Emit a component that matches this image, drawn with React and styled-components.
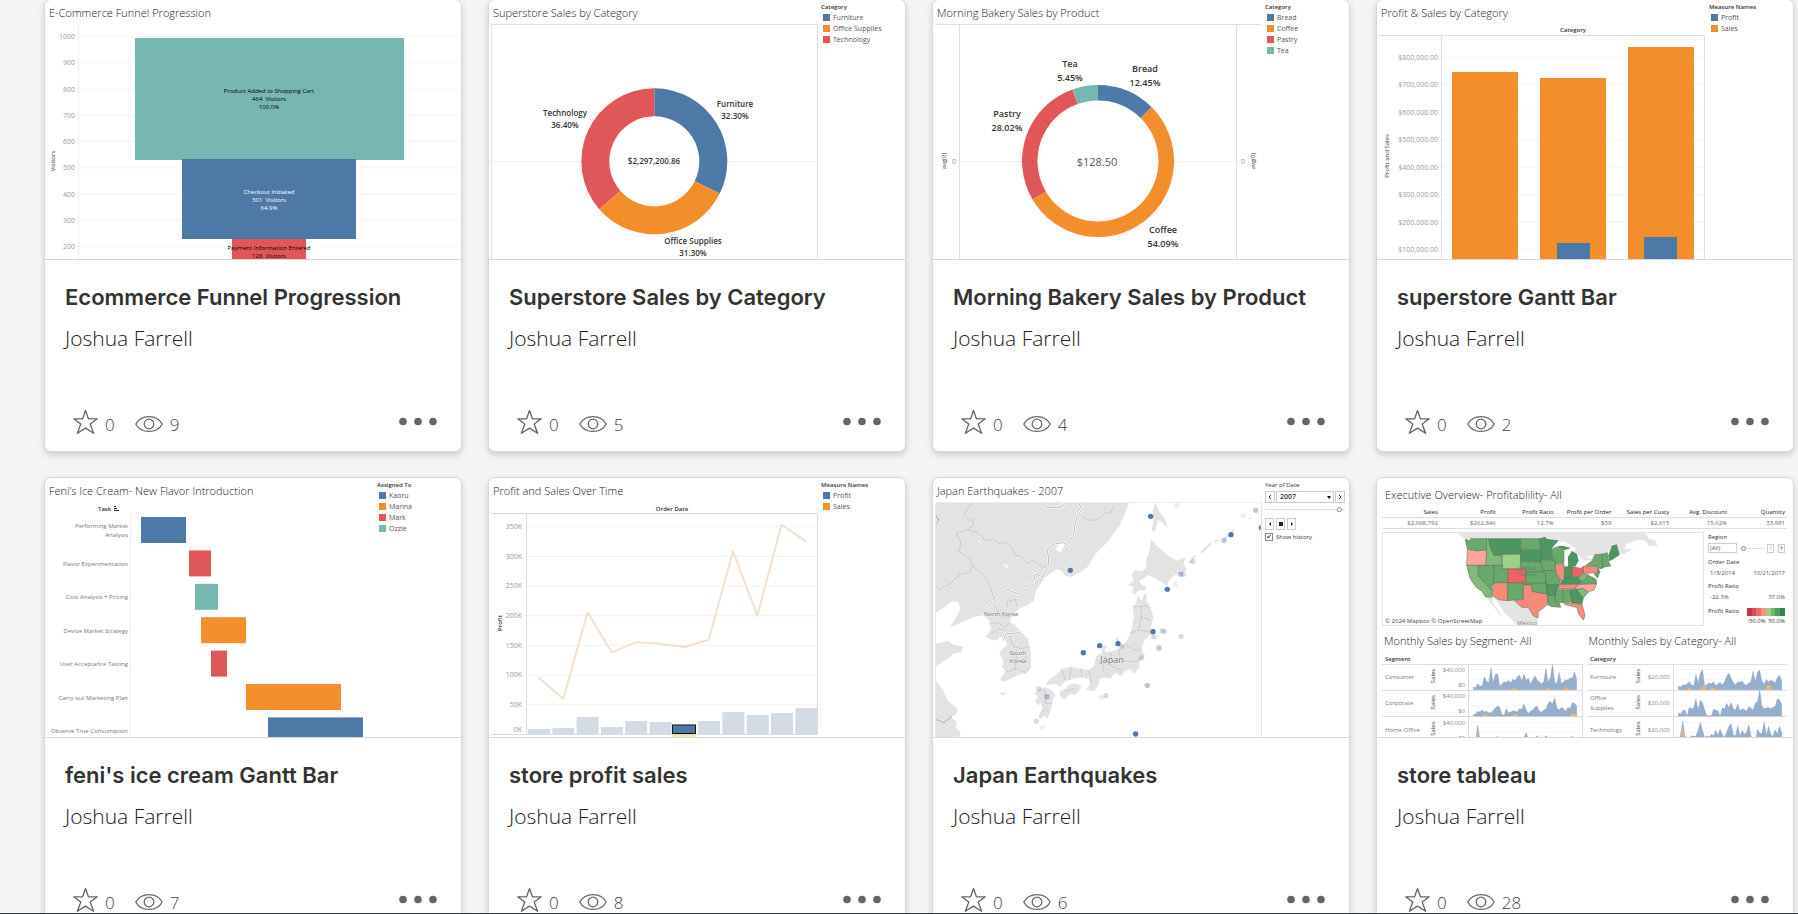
import React from 'react';
import styled, { createGlobalStyle, css } from 'styled-components';

const BLUE = '#4e79a7';
const ORANGE = '#f28e2b';
const RED = '#e15759';
const TEAL = '#76b7b2';
const FONT = '"Open Sans", "Noto Sans", sans-serif';

const GlobalStyle = createGlobalStyle`
  *, *::before, *::after { box-sizing: border-box; }
  body {
    margin: 0;
    background: #f4f4f4;
    color: #333;
    font-family: ${FONT};
  }
  button, input, select { font: inherit; color: inherit; margin: 0; }
`;

/* ---------- page and card ---------- */

const Page = styled.main`
  height: 100vh;
  overflow: hidden;
  border-bottom: 1px solid #3a444c;
`;

const Grid = styled.div`
  display: grid;
  grid-template-columns: repeat(4, minmax(0, 1fr));
  gap: 25px 26px;
  margin-top: -1px;
  padding: 0 4px 25px 44px;
`;

const Card = styled.article`
  display: flex;
  flex-direction: column;
  overflow: hidden;
  background: #fff;
  border: 1px solid #d8d8d8;
  border-radius: 7px;
  box-shadow: 0 3px 6px rgba(0, 0, 0, 0.16);
`;

const Thumb = styled.div`
  display: flex;
  flex-direction: ${(p) => (p.$stacked ? 'column' : 'row')};
  height: 260px;
  padding-left: ${(p) => (p.$stacked ? 0 : 1)}px;
  overflow: hidden;
  border-bottom: 1px solid #d8d8d8;
`;

const Body = styled.div`
  display: flex;
  flex-direction: column;
  min-height: 191px;
  padding: 23px 24px 16px 20px;
`;

const CardTitle = styled.h2`
  margin: 0 0 13px;
  font-family: Inter, "Open Sans", sans-serif;
  font-size: 22px;
  line-height: 28px;
  font-weight: 600;
  white-space: nowrap;
`;

const Author = styled.a`
  font-size: 21px;
  line-height: 28px;
  font-weight: 300;
  color: #222;
  text-decoration: none;
`;

const TitleLink = styled.a`
  color: #333;
  text-decoration: none;
`;

const Footer = styled.div`
  display: flex;
  align-items: flex-end;
  gap: 20px;
  height: 26px;
  margin-top: auto;
  padding-left: 8px;
`;

const Stat = styled.div`
  display: flex;
  align-items: flex-end;
  gap: 7px;
  font-size: 17px;
  line-height: 20px;
  font-weight: 300;
  color: #444;
`;

const IconButton = styled.button`
  display: flex;
  padding: 0;
  border: 0;
  background: none;
  cursor: pointer;
`;

const MoreButton = styled(IconButton)`
  margin-left: auto;
`;

/* ---------- thumbnail parts ---------- */

const Main = styled.div`
  display: flex;
  flex-direction: column;
  flex: 1;
  min-width: 0;
`;

const Side = styled.aside`
  flex: none;
  width: 87px;
  padding: 2px 4px 0 3px;
  font-size: 6px;
  line-height: 10px;
  color: #333;
`;

const ThumbTitle = styled.h3`
  margin: 0;
  padding: ${(p) => (p.$roomy ? '9px 8px 5px' : '5px 3px 3px')};
  font-size: 11px;
  line-height: 16px;
  font-weight: 300;
  color: #222;
  white-space: nowrap;
`;

const Chart = styled.svg`
  display: block;
  width: 100%;
  flex: 1;
  min-height: 0;
  font-family: ${FONT};
  font-size: 6px;
  fill: #333;
`;

const Tick = styled.text`
  font-size: 7px;
  fill: #999;
`;

const Plot = ({ w = 329, y = 24, h = 235, label, children }) => (
  <Chart
    viewBox={`0 ${y} ${w} ${h}`}
    preserveAspectRatio="xMinYMin slice"
    role="img"
    aria-label={label}
  >
    {children}
  </Chart>
);

const LegendTitle = styled.div`
  font-weight: 600;
`;

const LegendList = styled.ul`
  margin: 0;
  padding: 0;
  list-style: none;
`;

const LegendItem = styled.li`
  display: flex;
  align-items: center;
  gap: 3px;
  height: 11px;
  padding-left: 2px;
  font-size: 7px;
  color: #555;
  white-space: nowrap;
`;

const Swatch = styled.span`
  width: 7px;
  height: 7px;
  background: ${(p) => p.$color};
`;

const Legend = ({ title, items }) => (
  <Side>
    <LegendTitle>{title}</LegendTitle>
    <LegendList>
      {items.map(([name, color]) => (
        <LegendItem key={name}>
          <Swatch $color={color} />
          {name}
        </LegendItem>
      ))}
    </LegendList>
  </Side>
);

const Framed = ({ title, children, side }) => (
  <Thumb>
    <Main>
      <ThumbTitle>{title}</ThumbTitle>
      {children}
    </Main>
    {side}
  </Thumb>
);

const VText = ({ x, y, children, ...rest }) => (
  <text transform={`translate(${x} ${y}) rotate(-90)`} textAnchor="middle" {...rest}>
    {children}
  </text>
);

const Lines = ({ x, ys, anchor = 'middle', rows, ...rest }) => (
  <g textAnchor={anchor} {...rest}>
    {rows.map((r, i) => (
      <text key={r + i} x={x} y={ys[i]}>{r}</text>
    ))}
  </g>
);

/* ---------- charts ---------- */

const Funnel = () => (
  <Framed title="E-Commerce Funnel Progression">
    <Plot w={415} label="Funnel of visitors by step">
      <path d="M32.5 25V260" stroke="#eee" />
      {[1000, 900, 800, 700, 600, 500, 400, 300, 200].map((v, i) => (
        <g key={v}>
          <path d={`M30 ${36.5 + i * 26.25}H414`} stroke="#f4f4f4" />
          <Tick x="29" y={39 + i * 26.25} textAnchor="end">{v}</Tick>
        </g>
      ))}
      <rect x="89" y="38" width="269" height="122" fill={TEAL} />
      <rect x="136" y="159" width="174" height="80" fill={BLUE} />
      <rect x="186" y="239" width="74" height="22" fill={RED} />
      <Lines x="223" ys={[93, 101, 109]} rows={['Product Added to Shopping Cart', '464\u00a0 Visitors', '100.0%']} fill="#000" />
      <Lines x="223" ys={[194, 202, 210]} rows={['Checkout Initiated', '301\u00a0 Visitors', '64.9%']} fill="#fff" />
      <Lines x="223" ys={[250, 258]} rows={['Payment Information Entered', '128\u00a0 Visitors']} fill="#000" />
      <VText x={9} y={161}>Visitors</VText>
    </Plot>
  </Framed>
);

const Donut = ({ cx, cy, outer, inner, parts }) => {
  let at = 0;
  const point = (r, t) =>
    `${(cx + r * Math.sin(t * 2 * Math.PI)).toFixed(2)} ${(cy - r * Math.cos(t * 2 * Math.PI)).toFixed(2)}`;
  return parts.map(([share, color]) => {
    const from = at;
    const to = at + share / 100;
    at = to;
    const big = share > 50 ? 1 : 0;
    return (
      <path
        key={color}
        fill={color}
        d={`M${point(outer, from)}A${outer} ${outer} 0 ${big} 1 ${point(outer, to)}L${point(inner, to)}A${inner} ${inner} 0 ${big} 0 ${point(inner, from)}Z`}
      />
    );
  });
};

const Superstore = () => (
  <Framed
    title="Superstore Sales by Category"
    side={<Legend title="Category" items={[['Furniture', BLUE], ['Office Supplies', ORANGE], ['Technology', RED]]} />}
  >
    <Plot label="Sales share by category">
      <path d="M1.5 260V24.5H327.5V260" fill="none" stroke="#ddd" />
      <path d="M2 161.5H327" stroke="#eee" />
      <circle cx="164" cy="161" r="46" fill="#fff" />
      <Donut cx={164.3} cy={161.3} outer={73} inner={45} parts={[[32.3, BLUE], [31.3, ORANGE], [36.4, RED]]} />
      <g fontSize="8" fontWeight="600" fill="#333">
        <Lines x="245" ys={[107, 119]} rows={['Furniture', '32.30%']} />
        <Lines x="75" ys={[116, 128]} rows={['Technology', '36.40%']} />
        <Lines x="203" ys={[244, 256]} rows={['Office Supplies', '31.30%']} />
        <text x="164" y="164" textAnchor="middle">$2,297,200.86</text>
      </g>
    </Plot>
  </Framed>
);

const Bakery = () => (
  <Framed
    title="Morning Bakery Sales by Product"
    side={<Legend title="Category" items={[['Bread', BLUE], ['Coffee', ORANGE], ['Pastry', RED], ['Tea', TEAL]]} />}
  >
    <Plot label="Bakery sales share by product">
      <path d="M1 24.5H327M25.5 25V260M302.5 25V260" stroke="#ddd" />
      <path d="M23 161.5H305" stroke="#eee" />
      <circle cx="164" cy="161" r="62" fill="#fff" />
      <Donut
        cx={164}
        cy={161}
        outer={76}
        inner={60.5}
        parts={[[12.45, BLUE], [54.08, ORANGE], [28.02, RED], [5.45, TEAL]]}
      />
      <g fontSize="9" fontWeight="600" fill="#333">
        <Lines x="136" ys={[67, 81]} rows={['Tea', '5.45%']} />
        <Lines x="211" ys={[72, 86]} rows={['Bread', '12.45%']} />
        <Lines x="73" ys={[117, 131]} rows={['Pastry', '28.02%']} />
        <Lines x="229" ys={[233, 247]} rows={['Coffee', '54.09%']} />
      </g>
      <text x="163" y="166" textAnchor="middle" fontSize="11" fill="#555">$128.50</text>
      <VText x={12} y={161}>avg(0)</VText>
      <VText x={321} y={161}>avg(0)</VText>
      <Tick x="18" y="164">0</Tick>
      <Tick x="307" y="164">0</Tick>
    </Plot>
  </Framed>
);

const ProfitBars = () => (
  <Framed
    title="Profit & Sales by Category"
    side={<Legend title="Measure Names" items={[['Profit', BLUE], ['Sales', ORANGE]]} />}
  >
    <Plot label="Profit and sales by category">
      <text x="195" y="32" textAnchor="middle" fontWeight="600">Category</text>
      <path d="M1 35.5H326.5V260M63.5 35.5V260" fill="none" stroke="#ddd" />
      {[8, 7, 6, 5, 4, 3, 2, 1].map((n, i) => (
        <g key={n}>
          <path d={`M64 ${57 + i * 27.5}H326`} stroke="#f4f4f4" />
          <Tick x="60" y={59.5 + i * 27.5} textAnchor="end">{`$${n}00,000.00`}</Tick>
        </g>
      ))}
      <g fill={ORANGE}>
        <rect x="74" y="72" width="66" height="190" />
        <rect x="162" y="78" width="66" height="190" />
        <rect x="250" y="47" width="66" height="220" />
      </g>
      <g fill={BLUE}>
        <rect x="179" y="243" width="33" height="20" />
        <rect x="266" y="237" width="33" height="30" />
      </g>
      <VText x={11} y={156}>Profit and Sales</VText>
    </Plot>
  </Framed>
);

const TASKS = [
  [['Performing Market', 'Analysis'], 95, 45, BLUE],
  [['Flavor Experimentation'], 143, 22, RED],
  [['Cost Analysis + Pricing'], 149, 23, TEAL],
  [['Devise Market Strategy'], 155, 45, ORANGE],
  [['User Acceptance Tasting'], 165, 16, RED],
  [['Carry out Marketing Plan'], 200, 95, ORANGE],
  [['Observe True Consumption'], 222, 95, BLUE],
];

const IceCream = () => (
  <Framed
    title="Feni’s Ice Cream- New Flavor Introduction"
    side={
      <Legend title="Assigned To" items={[['Kaoru', BLUE], ['Marina', ORANGE], ['Mark', RED], ['Ozzie', TEAL]]} />
    }
  >
    <Plot label="Gantt chart of tasks">
      <text x="52" y="33" fontWeight="600">Task</text>
      <path d="M68 28.5H70M68 30.5H71M68 32.5H73" stroke="#333" />
      <path d="M84.5 35V260" stroke="#eee" />
      {TASKS.map(([rows, x, w, color], i) => (
        <g key={rows[0]}>
          <rect x={x} y={39 + i * 33.4} width={w} height="26" fill={color} />
          <Lines
            x="82"
            anchor="end"
            fill="#777"
            rows={rows}
            ys={rows.length > 1 ? [50, 59] : [54.5 + i * 33.4]}
          />
        </g>
      ))}
    </Plot>
  </Framed>
);

const PROFIT_TOPS = [251, 250, 239, 249, 243, 244, 247, 243, 234, 237, 235, 230];
const SALES_YS = [199.7, 221, 134.3, 174.3, 164.3, 165.7, 169, 161.7, 73.3, 137.7, 46.7, 63.3];

const OverTime = () => (
  <Framed
    title="Profit and Sales Over Time"
    side={<Legend title="Measure Names" items={[['Profit', BLUE], ['Sales', ORANGE]]} />}
  >
    <Plot label="Profit and sales over time">
      <text x="182" y="33" textAnchor="middle" fontWeight="600">Order Date</text>
      {[350, 300, 250, 200, 150, 100, 50].map((n, i) => (
        <g key={n}>
          <path d={`M37 ${48.7 + i * 29.67}H327`} stroke="#f2f2f2" />
          <Tick x="32" y={51 + i * 29.67} textAnchor="end">{`${n}K`}</Tick>
        </g>
      ))}
      <Tick x="32" y="254" textAnchor="end">0K</Tick>
      {PROFIT_TOPS.map((t, i) => (
        <rect key={i} x={38 + i * 24.3} y={t} width="22" height={256 - t} fill="#d3dce4" />
      ))}
      <path d="M1 35.5H327.5V256.5M36.5 35.5V256M1 256.5H328" fill="none" stroke="#ddd" />
      <rect x="182.5" y="247" width="23" height="8.5" fill={BLUE} stroke="#111" />
      <rect x="182" y="257" width="24" height="2" fill="#f3ef9c" />
      <polyline
        points={SALES_YS.map((y, i) => `${49 + i * 24.25},${y}`).join(' ')}
        fill="none"
        stroke="#f3e0cc"
        strokeWidth="2"
        strokeLinejoin="round"
        strokeLinecap="round"
      />
      <VText x={12} y={145} fontWeight="600">Profit</VText>
    </Plot>
  </Framed>
);

/* ---------- earthquakes ---------- */

const QUAKES = [
  [1, [[668, 139], [909, 194], [427, 301], [718, 358], [675, 485], [570, 521], [515, 527], [466, 548], [623, 792], [1000, 173]]],
  [0.42, [[983, 121], [888, 211], [693, 534], [658, 646], [357, 680], [758, 313]]],
  [0.26, [[795, 274], [766, 313], [703, 482], [709, 485], [677, 500], [759, 499], [640, 564], [332, 657], [325, 754], [534, 677], [582, 529]]],
  [0.12, [[746, 107], [946, 136], [742, 343], [520, 682]]],
];

const ControlRow = styled.div`
  display: flex;
  align-items: center;
  gap: ${(p) => p.$gap || 2}px;
  margin-top: ${(p) => p.$top || 0}px;
`;

const TinyButton = styled.button`
  display: flex;
  align-items: center;
  justify-content: center;
  flex: none;
  width: ${(p) => p.$w || 10}px;
  height: ${(p) => p.$h || 12}px;
  padding: 0;
  border: 1px solid #ccc;
  background: #fff;
`;

const SelectBox = styled.div`
  position: relative;
  flex: 1;
  min-width: 0;

  &::after {
    content: '';
    position: absolute;
    right: 3px;
    top: 5px;
    border: 2px solid transparent;
    border-top: 3px solid #111;
    border-bottom: 0;
    pointer-events: none;
  }
`;

const YearSelect = styled.select`
  display: block;
  width: 100%;
  height: 12px;
  padding: 0 3px;
  border: 1px solid #ccc;
  border-radius: 0;
  background: #fff;
  appearance: none;
  font-size: 7px;
  line-height: 10px;
  font-weight: 600;
`;

const thumbKnob = css`
  appearance: none;
  width: 5px;
  height: 5px;
  border: 1px solid #888;
  border-radius: 50%;
  background: #fff;
`;

const Slider = styled.input`
  appearance: none;
  display: block;
  flex: ${(p) => (p.$w ? 'none' : 1)};
  width: ${(p) => (p.$w ? `${p.$w}px` : '100%')};
  min-width: 0;
  height: 5px;
  background: linear-gradient(#ddd, #ddd) center / 100% 1px no-repeat;

  &::-webkit-slider-thumb { ${thumbKnob} }
`;

const CheckLabel = styled.label`
  display: flex;
  align-items: center;
  gap: 3px;
  margin-top: 2px;
  white-space: nowrap;
`;

const CheckInput = styled.input`
  appearance: none;
  width: 8px;
  height: 8px;
  border: 1px solid #888;
  background: #fff;

  &:checked::after {
    content: '';
    display: block;
    width: 2px;
    height: 4px;
    margin: 0 auto;
    border: solid #444;
    border-width: 0 1px 1px 0;
    transform: rotate(40deg);
  }
`;

const Glyph = ({ d, stroke }) => (
  <svg width="6" height="6" viewBox="0 0 6 6" aria-hidden="true">
    <path d={d} fill={stroke ? 'none' : '#222'} stroke={stroke || 'none'} />
  </svg>
);

const LAND = [
  'M22 98H603L592 128L575 165L552 198L530 225L510 243L495 265L478 292L455 308L430 320L413 318L398 300L385 298L370 310L352 322L335 345L322 366L318 392L300 405L276 414L262 425L250 440L246 456L262 466L280 486L300 508L308 545L309 592L296 610L270 614L250 626L222 636L216 626L232 604L222 590L226 574L214 550L222 536L238 526L232 512L216 500L205 512L184 506L174 500L190 474L184 452L166 436L140 440L112 452L86 464L66 472L78 452L98 416L90 395L70 394L52 410L22 428Z',
  'M22 520L40 518L60 512L75 524L106 530L100 546L78 550L56 568L22 590Z',
  'M22 630L45 660L58 690L88 716L88 730L70 742L86 756L84 772L98 788L94 801H22Z',
  'M683 98L692 122L712 148L720 176L704 158L690 150L684 174L677 188L671 176L677 150L673 124L678 110Z',
  'M668 208L690 230L720 258L748 272L772 262L768 282L776 298L765 310L738 316L722 334L718 348L690 330L662 316L645 326L634 334L640 344L656 352L650 362L632 360L622 374L612 368L616 350L600 344L618 332L610 316L620 300L640 304L655 294L654 270L664 244Z',
  'M630 374L634 386L644 390L648 370L656 374L656 396L668 412L676 440L672 462L668 476L672 490L652 508L643 524L643 546L652 558L634 574L634 592L624 606L616 612L610 598L590 602L582 618L562 610L548 624L516 624L512 644L498 664L474 660L486 642L484 628L462 622L436 626L412 634L396 650L384 642L352 646L362 630L384 614L402 596L430 590L458 596L484 600L498 586L504 560L520 548L524 528L536 524L530 544L548 546L572 536L592 520L604 498L612 470L618 440L614 412L624 400Z',
  'M396 664L414 656L420 646L440 640L458 646L458 658L440 674L424 672L410 690L396 680Z',
  'M318 670L336 656L352 652L372 660L382 674L374 690L370 714L360 744L346 738L336 750L332 738L342 716L340 700L330 706L320 692L332 682Z',
  'M780 280L800 254L804 258L786 282ZM816 246L846 218L852 220L824 250ZM856 216L870 206L872 210L860 218ZM886 206L916 178L918 183L892 208ZM958 150L970 142L971 146ZM214 670L234 666L226 676ZM334 774L350 764L344 778ZM566 500L572 508L568 518L564 508Z',
];

const PROVINCES =
  'M132 98L108 130L124 152L134 148L138 164L118 180L134 184L152 188L172 212L196 208L214 220L236 218L250 230L262 256L284 260L296 280L318 272L342 290L360 292M118 180L84 190L98 216L94 246L124 264L134 290L166 312L186 350L200 392M134 290L124 308L96 312L66 342L34 358L22 344M462 140L480 150L510 150L530 130L550 126L560 108M200 410L222 440L250 440M238 410L236 396L262 388L268 410M184 462L210 458L230 470L244 460M190 490L212 476L232 480M246 498L256 530L280 536L302 530M234 570L262 580L300 560M236 606L262 596L290 606L306 590M266 540L262 600M614 410L662 408M640 410L640 440L668 452M640 440L632 480L604 490M632 480L664 486M592 520L612 540L640 540M572 536L576 566L600 576L632 572M548 546L552 590L582 600M530 560L524 600L548 622M504 570L526 580M484 600L490 640M430 590L424 628M458 596L462 622M402 600L412 630M350 660L352 700L372 700M338 730L352 716L364 728M410 664L440 656';

const BORDER =
  'M346 98L354 112L400 112L412 98M452 98L462 118L446 140L440 170L438 192L418 224L404 218L380 222L356 236L362 262L360 292L344 320L322 312L318 330L296 348L278 352L270 372L234 358L206 390L176 412L158 432M224 512L234 492L252 490L276 488';

const Quakes = () => (
  <Framed
    title="Japan Earthquakes - 2007"
    side={
      <Side as="form">
        <label htmlFor="quake-year">Year of Date</label>
        <ControlRow $top={1} $gap={1}>
          <TinyButton type="button" aria-label="Previous year">
            <Glyph d="M4 1L2 3L4 5" stroke="#333" />
          </TinyButton>
          <SelectBox>
            <YearSelect id="quake-year" defaultValue="2007">
              <option>2007</option>
            </YearSelect>
          </SelectBox>
          <TinyButton type="button" aria-label="Next year">
            <Glyph d="M2 1L4 3L2 5" stroke="#333" />
          </TinyButton>
        </ControlRow>
        <ControlRow $top={4}>
          <Slider type="range" aria-label="Year" defaultValue={96} />
        </ControlRow>
        <ControlRow $top={6}>
          <TinyButton type="button" $w={9} aria-label="Play backward"><Glyph d="M4 1V5L2 3Z" /></TinyButton>
          <TinyButton type="button" $w={9} aria-label="Stop"><Glyph d="M1 1H5V5H1Z" /></TinyButton>
          <TinyButton type="button" $w={9} aria-label="Play forward"><Glyph d="M2 1V5L4 3Z" /></TinyButton>
        </ControlRow>
        <CheckLabel>
          <CheckInput type="checkbox" defaultChecked />
          Show history
        </CheckLabel>
      </Side>
    }
  >
    <Plot label="Map of earthquakes around Japan">
      <g transform="translate(-6 -8) scale(.33333)">
        <g fill="#e3e3e3">
          {LAND.map((d) => <path key={d} d={d} />)}
        </g>
        <path d="M384 236L392 220L412 218L404 236L396 250ZM150 214L158 212L160 220ZM226 282L238 286L240 298Z" fill="#fff" />
        <path d={PROVINCES} fill="none" stroke="#b4b4b4" strokeWidth="2" strokeDasharray="5 2" />
        <path d={BORDER} fill="none" stroke="#fff" strokeWidth="7" />
        <path d={`${BORDER}M22 134L32 150L26 160M22 748L48 758L72 738`} fill="none" stroke="#999" strokeWidth="2" />
        <clipPath id="quake-frame"><path d="M22 98H998V802H22Z" /></clipPath>
        <g clipPath="url(#quake-frame)">
          {QUAKES.map(([opacity, dots]) =>
            dots.map(([x, y]) => (
              <circle key={`${x}-${y}`} cx={x} cy={y} r="8" fill={BLUE} fillOpacity={opacity} />
            )),
          )}
        </g>
      </g>
      <path d="M1.5 260V24.5H327" fill="none" stroke="#eee" />
      <path d="M327.5 24V260" stroke="#e4e4e4" />
      <g textAnchor="middle" fill="#777" stroke="#eee" strokeWidth="1" paintOrder="stroke">
        <text x="67" y="138">North Korea</text>
        <text x="84" y="177">South</text>
        <text x="84" y="185">Korea</text>
        <text x="178" y="185" fontSize="9">Japan</text>
      </g>
    </Plot>
  </Framed>
);

/* ---------- executive overview ---------- */

const KpiWrap = styled.div`
  padding: 0 6px 3px 5px;
`;

const KpiTable = styled.table`
  width: 100%;
  border-collapse: separate;
  border-spacing: 0;
  table-layout: fixed;
  font-size: 6px;
  text-align: right;
  white-space: nowrap;

  th, td { padding: 0 2px 0 0; border-bottom: 1px solid #ddd; }
  th { height: 10px; line-height: 9px; font-weight: 400; color: #222; }
  td { height: 11px; line-height: 10px; color: #666; }
`;

const MapRow = styled.div`
  display: flex;
  flex: none;
  gap: 4px;
  height: 94px;
  padding: 0 8px 0 5px;
`;

const MapBox = styled.div`
  display: flex;
  flex: 1;
  min-width: 0;
  border: 1px solid #e2e2e2;
`;

const Filters = styled.form`
  flex: none;
  width: 77px;
  padding-top: 1px;
  font-size: 6px;
  line-height: 9px;
  color: #333;
`;

const FilterLabel = styled.label`
  display: block;
  white-space: nowrap;
`;

const FilterRow = styled.div`
  display: flex;
  align-items: center;
  justify-content: space-between;
  margin: ${(p) => p.$m || '0'};
  padding-left: ${(p) => p.$indent || 0}px;
  color: ${(p) => (p.$dark ? '#333' : '#555')};
`;

const RegionInput = styled.input`
  width: 29px;
  height: 10px;
  padding: 0 1px;
  border: 1px solid #ccc;
  line-height: 8px;
`;

const Ramp = styled.div`
  width: 38px;
  height: 8px;
  background: linear-gradient(
    90deg,
    #c63457 0 12%, #dd4a5d 12% 24%, #ee6a66 24% 36%, #fb9384 36% 50%,
    #9bd086 50% 62%, #72b56e 62% 75%, #4f9d5d 75% 88%, #2d8652 88%
  );
`;

const RampLabels = styled.div`
  display: grid;
  grid-template-columns: 19px 19px;
  justify-content: end;
  line-height: 11px;
  white-space: nowrap;

  span:last-child { text-align: right; }
`;

const Halves = styled.div`
  display: grid;
  grid-template-columns: 1fr 1fr;
  gap: 4px;
  flex: 1;
  min-height: 0;
  padding: 7px 6px 0 5px;
`;

const Half = styled.section`
  display: flex;
  flex-direction: column;
  min-width: 0;
  min-height: 0;
`;

const HalfTitle = styled(ThumbTitle)`
  padding: 0 0 0 2px;
`;

const G1 = '#4c965f';
const G2 = '#6aa96c';
const G3 = '#80ba78';
const G4 = '#9dd188';
const S1 = '#f58b79';
const S2 = '#fba698';
const R1 = '#e96465';

const STATES = [
  [G2, 'M286 208L300 212L302 206H350V240L320 243L292 238Z'],
  [S2, 'M292 238L320 243L350 240L348 286H290Z'],
  [G3, 'M290 286H325V318L367 362L364 382L346 380L336 364L318 352L300 325Z'],
  [G2, 'M325 286H372V338L366 350V362L325 318Z'],
  [G3, 'M350 206H356L360 230L372 256H396V286H348L350 240Z'],
  [G1, 'M356 206H452V253L372 256L360 230Z'],
  [G4, 'M397 253H452V296H397Z'],
  [G2, 'M372 286H397V297H413V338H372Z'],
  [R1, 'M413 297H468V339H413Z'],
  [S1, 'M372 338H413V392L388 390L366 376L370 350Z'],
  [G2, 'M413 339H460V388L413 392Z'],
  [G2, 'M452 206H508L512 240H452Z'],
  [G1, 'M452 241H512L514 276L452 274Z'],
  [G2, 'M452 275L508 277L514 276L522 306H468V297H452Z'],
  [G2, 'M468 306H522L528 312V340H468Z'],
  [G2, 'M460 340H528L532 372L505 368L485 364V345H460Z'],
  [S1, 'M460 345H485V364L505 368L532 372L536 400L520 414L505 425L504 444L490 438L475 412L455 412L433 392L460 388Z'],
  [G1, 'M508 206L526 202L530 208L564 212L545 235V258L555 268L512 270V240Z'],
  [G2, 'M512 270H555L562 288L555 302H517Z'],
  [G2, 'M520 302H557L572 332L566 345L528 343V312Z'],
  [G1, 'M528 343L566 345L558 378L532 376Z'],
  [G2, 'M532 376L556 378L554 395L568 398L572 412L545 410L534 405Z'],
  [G2, 'M545 238L560 230L582 242V280H558L547 260Z'],
  [S1, 'M556 282H582L584 318L575 336L558 310Z'],
  [G1, 'M594 262L606 244L620 252L625 272L616 288L595 290Z'],
  [G1, 'M564 230L582 222L606 232L582 240Z'],
  [G1, 'M584 290H606V325L582 330Z'],
  [R1, 'M606 290L622 292L640 286V308L625 322L606 318Z'],
  [G1, 'M568 343L582 328L606 320L625 322L634 336L620 343Z'],
  [S1, 'M568 344L628 343L610 357H565Z'],
  [G2, 'M558 360L578 359V398L554 395Z'],
  [G2, 'M578 359H600L606 396L580 399Z'],
  [G1, 'M600 359L620 358L640 384L636 402L606 399Z'],
  [S1, 'M584 399L636 402L645 436L640 450L626 432L620 412L602 408L586 404Z'],
  [G3, 'M620 358L640 355L655 366L640 384Z'],
  [S2, 'M628 343L680 341L672 360L655 366L640 355L610 358Z'],
  [G2, 'M620 342L642 332L655 316L678 328L680 341Z'],
  [G3, 'M625 322L640 310L656 314L642 332L632 334Z'],
  [S1, 'M640 288H684L686 308L640 310Z'],
  [G2, 'M648 286L668 270L675 254L697 252V284L700 294L690 296L684 288Z'],
  [G2, 'M697 252L712 248L716 274L722 288L698 292Z'],
  [G1, 'M716 256L726 228L740 224L748 254L728 268L718 272Z'],
  [G2, 'M684 292L690 306L682 324L672 312L684 308Z'],
];

const UsMap = () => (
  <Plot w={320} y={55} h={92} label="Profit ratio by state">
    <g transform="translate(-13 -8) scale(.33333)">
      <path
        d="M262 189L288 208H508L564 212L606 232L640 272L668 270L676 254L712 248L726 228L740 224L748 250L762 252L790 236L764 238L770 222L800 210L826 212L838 228L862 228L856 212L838 206L826 189Z"
        fill="#e4e4e4"
      />
      <path d="M346 380L366 376L388 390L413 392L433 392L455 412H475L490 438L504 444L500 472H452L428 452L404 430L372 382L366 396L392 430L398 444L372 412Z" fill="#e4e4e4" />
      <g stroke="#5b6b5b" strokeWidth="1.6" strokeLinejoin="round">
        {STATES.map(([fill, d]) => <path key={d} d={d} fill={fill} />)}
      </g>
      <path d="M552 226L580 212L602 226L620 240L606 240L594 256L592 286L584 284L586 244L604 234L580 228Z" fill="#fff" />
      <path d="M620 292L644 276L646 284L632 294ZM646 262L668 256L666 264Z" fill="#fff" />
    </g>
    <text x="2" y="145" fill="#444">© 2024 Mapbox  © OpenStreetMap</text>
    <text x="144" y="92" textAnchor="middle" fill="#55855a">United</text>
    <text x="144" y="98" textAnchor="middle" fill="#55855a">States</text>
    <text x="144" y="147" textAnchor="middle" fill="#888">Mexico</text>
  </Plot>
);

const SEGMENTS = [
  ['Consumer', '$40,000', [8, 6, 18, 10, 12, 38, 26, 20, 66, 20, 46, 48, 10, 18, 24, 22, 28, 20, 32, 26, 38, 44, 26, 46, 28, 34, 18, 30, 42, 28, 24, 18, 24, 64, 22, 36, 76, 24, 18, 52, 18, 24, 30, 28, 36, 34, 54, 30], [[122, 6], [222, 5], [276, 6]]],
  ['Corporate', '$40,000', [4, 6, 14, 12, 18, 12, 14, 10, 10, 16, 24, 30, 26, 4, 2, 22, 10, 12, 16, 14, 12, 22, 20, 36, 18, 8, 14, 18, 26, 30, 14, 12, 18, 22, 38, 44, 36, 54, 24, 18, 26, 22, 14, 26, 22, 40, 38, 30], [[34, 4], [124, 5], [298, 8]]],
  ['Home Office', '$40,000', [2, 6, 52, 8, 3, 6, 8, 6, 8, 10, 12, 19, 8, 4, 6, 8, 6, 8, 10, 12, 8, 10, 12, 14, 29, 10, 8, 12, 12, 20, 8, 10, 12, 20, 12, 16, 10, 10, 12, 12, 16, 14, 12, 10, 12, 19, 12, 8], [[13, 40]]],
];

const CATEGORIES = [
  ['Furniture', '$20,000', [10, 8, 14, 14, 18, 24, 14, 12, 46, 20, 50, 60, 10, 16, 20, 18, 24, 12, 18, 22, 14, 24, 40, 50, 34, 22, 14, 24, 22, 26, 16, 14, 20, 24, 56, 24, 54, 58, 26, 16, 30, 24, 28, 26, 20, 36, 44, 26], [[30, 6], [74, 12], [102, 6], [270, 14]]],
  ['Office Supplies', '$20,000', [10, 6, 16, 18, 0, 26, 22, 24, 52, 18, 48, 40, 18, 0, 0, 0, 20, 18, 16, 0, 24, 22, 38, 24, 40, 22, 18, 36, 16, 22, 20, 14, 28, 24, 18, 38, 44, 78, 30, 22, 24, 26, 22, 26, 28, 52, 48, 36], [[86, 3]]],
  ['Technology', '$20,000', [6, 22, 64, 18, 14, 12, 20, 18, 18, 36, 60, 36, 14, 20, 16, 24, 20, 36, 22, 40, 24, 14, 32, 48, 56, 22, 20, 50, 20, 36, 24, 30, 52, 20, 0, 0, 40, 28, 26, 62, 22, 48, 24, 18, 38, 24, 48, 28], [[13, 50]]],
];

const area = (values, base) =>
  `M310 ${base}${values.map((v, i) => `L${(310 + i * 6.6).toFixed(1)} ${base - v}`).join('')}L620 ${base}Z`;

const markPath = (x, h, base) =>
  h > 30
    ? `M${304 + x} ${base}L${310 + x} ${base - h}L${316 + x} ${base}Z`
    : `M${302 + x} ${base}L${308 + x} ${base - h}L${316 + x} ${base - h}L${320 + x} ${base}Z`;

const Monthly = ({ head, rows, label }) => (
  <Plot w={201} y={171} h={88} label={label}>
    <text x="3" y="183" fontWeight="600">{head}</text>
    <path d="M0 186.5H200.5V260M86.5 186.5V260M0 212.5H200M0 238.5H200" fill="none" stroke="#ddd" />
    {rows.map(([name, top, values, marks], i) => {
      const y = 186 + i * 26.3;
      const base = 659 + i * 79;
      const words = name === 'Office Supplies' ? name.split(' ') : [name];
      return (
        <g key={name}>
          <Lines x="3" anchor="start" fill="#777" rows={words} ys={words.length > 1 ? [y + 10, y + 20] : [y + 15]} />
          <VText x={53} y={y + 12}>Sales</VText>
          {head === 'Segment' ? (
            <Lines x="83" anchor="end" fill="#888" rows={[top, '$0']} ys={[y + 8, y + 23]} />
          ) : (
            <text x="83" y={y + 15} textAnchor="end" fill="#888">{top}</text>
          )}
          <g transform="translate(-12 -8) scale(.33333)">
            <path d={`M298 ${base - 30}H636M298 ${base - 60}H636`} stroke="#f0f0f0" strokeWidth="2" />
            <path d={area(values, base)} fill="#94aecb" stroke="#7f9fc1" strokeWidth="1" />
            {marks.map(([x, h]) => (
              <path key={x} d={markPath(x, h, base)} fill="#f8b26c" />
            ))}
          </g>
        </g>
      );
    })}
  </Plot>
);

const KPIS = [
  ['Sales', '$2,068,792'],
  ['Profit', '$262,846'],
  ['Profit Ratio', '12.7%'],
  ['Profit per Order', '$59'],
  ['Sales per Custy', '$2,615'],
  ['Avg. Discount', '15.62%'],
  ['Quantity', '33,981'],
];

const Executive = () => (
  <Thumb $stacked>
    <ThumbTitle $roomy>Executive Overview- Profitablility- All</ThumbTitle>
    <KpiWrap>
      <KpiTable>
        <thead>
          <tr>{KPIS.map(([k]) => <th key={k} scope="col">{k}</th>)}</tr>
        </thead>
        <tbody>
          <tr>{KPIS.map(([k, v]) => <td key={k}>{v}</td>)}</tr>
        </tbody>
      </KpiTable>
    </KpiWrap>
    <MapRow>
      <MapBox><UsMap /></MapBox>
      <Filters>
        <FilterLabel htmlFor="region">Region</FilterLabel>
        <FilterRow $m="1px 0 5px">
          <RegionInput id="region" defaultValue="(All)" />
          <Slider type="range" $w={22} aria-label="Region position" defaultValue={0} />
          <TinyButton type="button" $w={7} $h={9} aria-label="Previous region">
            <Glyph d="M4 1L2 3L4 5" stroke="#bbb" />
          </TinyButton>
          <TinyButton type="button" $w={7} $h={9} aria-label="Next region">
            <Glyph d="M2 1L4 3L2 5" stroke="#333" />
          </TinyButton>
        </FilterRow>
        <div>Order Date</div>
        <FilterRow $m="2px 0 4px" $indent={2}><span>1/3/2014</span><span>10/21/2017</span></FilterRow>
        <div>Profit Ratio</div>
        <FilterRow $m="2px 0 5px" $indent={2}><span>-22.3%</span><span>37.0%</span></FilterRow>
        <FilterRow $dark><span>Profit Ratio</span><Ramp /></FilterRow>
        <RampLabels><span>-50.0%</span><span>50.0%</span></RampLabels>
      </Filters>
    </MapRow>
    <Halves>
      <Half>
        <HalfTitle>Monthly Sales by Segment- All</HalfTitle>
        <Monthly head="Segment" rows={SEGMENTS} label="Monthly sales by segment" />
      </Half>
      <Half>
        <HalfTitle>Monthly Sales by Category- All</HalfTitle>
        <Monthly head="Category" rows={CATEGORIES} label="Monthly sales by category" />
      </Half>
    </Halves>
  </Thumb>
);

/* ---------- icons ---------- */

const StarIcon = () => (
  <svg width="25" height="26" viewBox="0 0 25 26" fill="none" stroke="#666" strokeWidth="1.3" strokeLinejoin="round" aria-hidden="true">
    <path d="M12.5 1.5L15.4 9.8H24.3L17.2 15.1L20.6 24.3L12.5 19.1L4.4 24.3L7.8 15.1L.7 9.8H9.6Z" />
  </svg>
);

const EyeIcon = () => (
  <svg width="28" height="20" viewBox="0 0 28 20" fill="none" stroke="#666" strokeWidth="1.3" role="img" aria-label="Views">
    <path d="M.8 9C6 -.9 22 -.9 27.2 9C22 18.9 6 18.9 .8 9Z" />
    <circle cx="14" cy="9" r="4.8" />
  </svg>
);

const DotsIcon = () => (
  <svg width="38" height="26" viewBox="0 0 38 26" fill="#666" aria-hidden="true">
    <circle cx="4" cy="12.5" r="3.8" />
    <circle cx="19" cy="12.5" r="3.8" />
    <circle cx="34" cy="12.5" r="3.8" />
  </svg>
);

/* ---------- gallery ---------- */

const VIZZES = [
  ['Ecommerce Funnel Progression', 9, Funnel],
  ['Superstore Sales by Category', 5, Superstore],
  ['Morning Bakery Sales by Product', 4, Bakery],
  ['superstore Gantt Bar', 2, ProfitBars],
  ["feni's ice cream Gantt Bar", 7, IceCream],
  ['store profit sales', 8, OverTime],
  ['Japan Earthquakes', 6, Quakes],
  ['store tableau', 28, Executive],
];

const VizCard = ({ title, views, Preview }) => (
  <Card>
    <Preview />
    <Body>
      <CardTitle><TitleLink href="#viz">{title}</TitleLink></CardTitle>
      <Author href="#author">Joshua Farrell</Author>
      <Footer>
        <Stat>
          <IconButton type="button" aria-label="Add to favorites"><StarIcon /></IconButton>
          0
        </Stat>
        <Stat>
          <EyeIcon />
          {views}
        </Stat>
        <MoreButton type="button" aria-label="More actions"><DotsIcon /></MoreButton>
      </Footer>
    </Body>
  </Card>
);

export default function App() {
  return (
    <>
      <GlobalStyle />
      <Page>
        <Grid>
          {VIZZES.map(([title, views, Preview]) => (
            <VizCard key={title} title={title} views={views} Preview={Preview} />
          ))}
        </Grid>
      </Page>
    </>
  );
}
